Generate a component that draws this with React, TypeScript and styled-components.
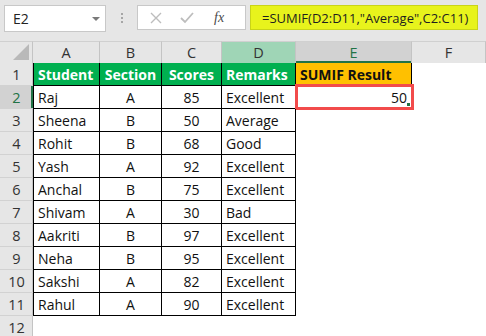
import React from 'react';
import styled, { createGlobalStyle } from 'styled-components';

const GlobalStyle = createGlobalStyle`
  html, body {
    margin: 0;
    padding: 0;
    background: #ffffff;
  }
  * {
    box-sizing: border-box;
  }
`;

const COLS = '33px 67px 62px 60px 74px 116px 1fr';
const SHEET_FONT = `'Open Sans', 'Noto Sans', sans-serif`;

type Student = { name: string; section: string; score: number; remark: string };

const students: Student[] = [
  { name: 'Raj', section: 'A', score: 85, remark: 'Excellent' },
  { name: 'Sheena', section: 'B', score: 50, remark: 'Average' },
  { name: 'Rohit', section: 'B', score: 68, remark: 'Good' },
  { name: 'Yash', section: 'A', score: 92, remark: 'Excellent' },
  { name: 'Anchal', section: 'B', score: 75, remark: 'Excellent' },
  { name: 'Shivam', section: 'A', score: 30, remark: 'Bad' },
  { name: 'Aakriti', section: 'B', score: 97, remark: 'Excellent' },
  { name: 'Neha', section: 'B', score: 95, remark: 'Excellent' },
  { name: 'Sakshi', section: 'A', score: 82, remark: 'Excellent' },
  { name: 'Rahul', section: 'A', score: 90, remark: 'Excellent' },
];

const Page = styled.div`
  width: 486px;
  height: 336px;
  overflow: hidden;
  background: #ffffff;
  font-family: ${SHEET_FONT};
`;

/* ---------- formula bar ---------- */

const Toolbar = styled.div`
  height: 41px;
  background: #e6e6e6;
  display: flex;
  align-items: flex-start;
  padding: 5px 0 0 4px;
`;

const NameBox = styled.div`
  width: 102px;
  height: 27px;
  background: #ffffff;
  border: 1px solid #c8c8c8;
  display: flex;
  align-items: center;
  justify-content: space-between;
  padding: 0 5px 0 8px;
  font-size: 14px;
  color: #222;
`;

const Caret = styled.span`
  width: 0;
  height: 0;
  border-left: 4px solid transparent;
  border-right: 4px solid transparent;
  border-top: 4px solid #7a7a7a;
`;

const Grip = styled.div`
  width: 31px;
  height: 25px;
  display: flex;
  flex-direction: column;
  align-items: center;
  justify-content: center;
  gap: 2px;
  span {
    width: 2px;
    height: 2px;
    background: #a6a6a6;
  }
`;

const ButtonBox = styled.div`
  width: 109px;
  height: 25px;
  background: #ffffff;
  border: 1px solid #c8c8c8;
  display: flex;
  align-items: center;
  padding-left: 12px;
  gap: 18px;
`;

const FxLabel = styled.span`
  font-family: 'Liberation Serif', serif;
  font-style: italic;
  font-size: 14px;
  color: #4a4a4a;
  margin-left: 2px;
`;

const FormulaInput = styled.div`
  margin-left: 4px;
  width: 228px;
  height: 25px;
  background: #e8f31c;
  border: 1px solid #c9d418;
  display: flex;
  align-items: center;
  padding-left: 11px;
  font-size: 13px;
  color: #1e1e1e;
  white-space: nowrap;
`;

/* ---------- sheet ---------- */

const Row = styled.div<{ $height: number }>`
  display: grid;
  grid-template-columns: ${COLS};
  height: ${(p) => p.$height}px;
`;

const ColHead = styled.div<{ $state?: 'selected' | 'ref' }>`
  display: flex;
  align-items: center;
  justify-content: center;
  font-size: 14.5px;
  border-right: 1px solid #c4c4c4;
  border-top: 1px solid #d0d0d0;
  background: ${(p) =>
    p.$state === 'selected' ? '#d2d2d2' : p.$state === 'ref' ? '#9fd5b6' : '#e6e6e6'};
  color: ${(p) => (p.$state === 'selected' ? '#217346' : '#333')};
  box-shadow: ${(p) => (p.$state === 'selected' ? 'inset 0 -2px 0 #217346' : 'none')};
`;

const Corner = styled.div`
  position: relative;
  background: #e6e6e6;
  border-right: 1px solid #c4c4c4;
  border-top: 1px solid #d0d0d0;
  &::after {
    content: '';
    position: absolute;
    right: 3px;
    bottom: 3px;
    width: 0;
    height: 0;
    border-left: 16px solid transparent;
    border-bottom: 16px solid #b9b9b9;
  }
`;

const RowHead = styled.div<{ $selected?: boolean }>`
  display: flex;
  align-items: center;
  justify-content: center;
  font-size: 14.5px;
  background: ${(p) => (p.$selected ? '#d2d2d2' : '#e6e6e6')};
  color: ${(p) => (p.$selected ? '#217346' : '#333')};
  border-bottom: 1px solid #d2d2d2;
  box-shadow: ${(p) => (p.$selected ? 'inset -2px 0 0 #217346' : 'inset -1px 0 0 #c4c4c4')};
`;

const Cell = styled.div<{
  $align?: 'left' | 'center' | 'right';
  $fill?: 'green' | 'gold';
  $first?: boolean;
}>`
  position: relative;
  display: flex;
  align-items: center;
  justify-content: ${(p) =>
    p.$align === 'center' ? 'center' : p.$align === 'right' ? 'flex-end' : 'flex-start'};
  padding: 0 4px;
  font-size: 14px;
  white-space: nowrap;
  overflow: visible;
  background: ${(p) =>
    p.$fill === 'green' ? '#00b050' : p.$fill === 'gold' ? '#ffc000' : '#ffffff'};
  color: ${(p) => (p.$fill === 'green' ? '#ffffff' : '#111')};
  font-weight: ${(p) => (p.$fill ? 700 : 400)};
  border-right: 1px solid #000;
  border-bottom: 1px solid #000;
  border-left: ${(p) => (p.$first ? '1px solid #000' : 'none')};
`;

const Blank = styled.div`
  background: #ffffff;
`;

const ActiveFrame = styled.div`
  position: absolute;
  top: -2px;
  left: -1px;
  right: -3px;
  bottom: -2px;
  border: 3px solid #f24b4b;
  pointer-events: none;
`;

const FillHandle = styled.span`
  position: absolute;
  right: 1px;
  bottom: 1px;
  width: 3px;
  height: 3px;
  background: #217346;
`;

const CrossIcon = () => (
  <svg width="12" height="12" viewBox="0 0 12 12">
    <path d="M1 1 L11 11 M11 1 L1 11" stroke="#bdbdbd" strokeWidth="1.4" fill="none" />
  </svg>
);

const CheckIcon = () => (
  <svg width="14" height="12" viewBox="0 0 14 12">
    <path d="M1 6 L5 10 L13 1" stroke="#bdbdbd" strokeWidth="1.8" fill="none" />
  </svg>
);

export default function App() {
  return (
    <Page>
      <GlobalStyle />
      <Toolbar>
        <NameBox>
          E2
          <Caret />
        </NameBox>
        <Grip>
          <span />
          <span />
          <span />
        </Grip>
        <ButtonBox>
          <CrossIcon />
          <CheckIcon />
          <FxLabel>fx</FxLabel>
        </ButtonBox>
        <FormulaInput>=SUMIF(D2:D11,"Average",C2:C11)</FormulaInput>
      </Toolbar>

      <Row $height={22}>
        <Corner />
        <ColHead>A</ColHead>
        <ColHead>B</ColHead>
        <ColHead>C</ColHead>
        <ColHead $state="ref">D</ColHead>
        <ColHead $state="selected">E</ColHead>
        <ColHead>F</ColHead>
      </Row>

      <Row $height={23}>
        <RowHead>1</RowHead>
        <Cell $fill="green" $first>Student</Cell>
        <Cell $fill="green" $align="center">Section</Cell>
        <Cell $fill="green" $align="center">Scores</Cell>
        <Cell $fill="green">Remarks</Cell>
        <Cell $fill="gold">SUMIF Result</Cell>
        <Blank />
      </Row>

      {students.map((s, i) => (
        <Row $height={23} key={s.name}>
          <RowHead $selected={i === 0}>{i + 2}</RowHead>
          <Cell $first>{s.name}</Cell>
          <Cell $align="center">{s.section}</Cell>
          <Cell $align="center">{s.score}</Cell>
          <Cell>{s.remark}</Cell>
          {i === 0 ? (
            <Cell $align="right">
              50
              <ActiveFrame>
                <FillHandle />
              </ActiveFrame>
            </Cell>
          ) : (
            <Blank />
          )}
          <Blank />
        </Row>
      ))}

      <Row $height={23}>
        <RowHead>12</RowHead>
      </Row>
    </Page>
  );
}
